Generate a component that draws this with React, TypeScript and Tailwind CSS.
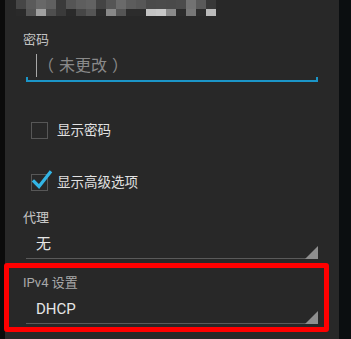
const topRow = [
  '#464646', '#5a5a5a', '#686868', '#606060', '#3a3a3a', '#555555', '#5e5e5e', '#626262', '#444444', '#555555',
  '#6a6a6a', '#5c5c5c', '#575757', '#4a4a4a', '#4b4b4b', '#4a4a4a', '#4c4c4c', '#727272', '#5a5a5a', '#383838',
]
const bottomRow = [
  '#2a2a2a', '#555555', '#a0a0a0', '#4e4e4e', '#3a3a3a', '#2a2a2a', '#464646', '#555555', '#2c2c2c', '#888888',
  '#555555', '#2c2c2c', '#2c2c2c', '#c4c4c4', '#c8c8c8', '#8a8a8a', '#2c2c2c', '#777777', '#2c2c2c', '#bbbbbb',
]

const Mosaic = () => (
  <div className="ml-[11px] flex flex-col">
    <div className="flex">
      {topRow.map((c, i) => (
        <div key={i} className="w-[10px] h-[9px]" style={{ backgroundColor: c }} />
      ))}
    </div>
    <div className="flex">
      {bottomRow.map((c, i) => (
        <div key={i} className="w-[10px] h-[7px]" style={{ backgroundColor: c }} />
      ))}
    </div>
  </div>
)

const Label = ({ text, className }: { text: string; className: string }) => (
  <div className={'ml-[18px] h-[16px] leading-[16px] text-[13px] ' + className}>{text}</div>
)

const Checkbox = ({ checked, label, className }: { checked?: boolean; label: string; className: string }) => (
  <div className={'ml-[26px] flex items-center h-[18px] ' + className}>
    <div className="relative w-[17px] h-[17px] border-[1.5px] border-[#575757]">
      {checked && (
        <svg className="absolute left-[-1.5px] top-[-1.5px] overflow-visible" width="17" height="17" viewBox="0 0 17 17">
          <path d="M3 8.5 L8 13.5 L19 -0.5" fill="none" stroke="#33b5e5" strokeWidth="3.2" strokeLinecap="square" />
        </svg>
      )}
    </div>
    <span className="ml-[9px] text-[13.5px] leading-[18px] text-[#e2e2e2]">{label}</span>
  </div>
)

const Spinner = ({ value }: { value: string }) => (
  <div className="relative ml-[21px] w-[292px] h-[33px] flex flex-col">
    <div className="h-[32px] flex items-end pb-[4px] pl-[10px]">
      <span className="text-[15px] leading-[20px] text-[#e6e6e6]">{value}</span>
    </div>
    <div className="h-[1px] bg-[#5a5a5a]" />
    <svg className="absolute right-0 bottom-0" width="13" height="13" viewBox="0 0 13 13">
      <polygon points="13,0 13,13 0,13" fill="#8e8e8e" />
    </svg>
  </div>
)

export default function App() {
  return (
    <div
      className="relative w-[351px] h-[339px] flex bg-[#0b0e10] overflow-hidden"
      style={{ fontFamily: 'Roboto, "Noto Sans CJK SC", sans-serif' }}
    >
      <div className="w-[5px] bg-[#0b0b0b]" />
      <div className="w-[334px] bg-[#282828] flex flex-col">
        <Mosaic />
        <Label text="密码" className="mt-[16px] text-[#c4c4c4]" />

        {/* password field, focused */}
        <div className="ml-[21px] w-[292px]">
          <div className="h-[29px] pt-[6px] flex items-center pl-[10px]">
            <div className="w-px h-[23px] bg-[#a8a8a8]" />
            <span className="ml-[1px] text-[16px] leading-[23px] text-[#8a8a8a]">
              <span className="mr-[5px]">（</span>未更改<span className="ml-[5px]">）</span>
            </span>
          </div>
          <div className="h-[5px] border-2 border-t-0 border-[#1b95c8]" />
        </div>

        <Checkbox label="显示密码" className="mt-[39px]" />
        <Checkbox checked label="显示高级选项" className="mt-[34px]" />

        <Label text="代理" className="mt-[19px] text-[#c8c8c8]" />
        <Spinner value="无" />

        <Label text="IPv4 设置" className="mt-[16px] text-[#a8a8a8]" />
        <Spinner value="DHCP" />
      </div>
      <div className="flex-1 bg-[#0b0e10]" />

      <div className="absolute left-[4px] top-[263px] w-[325px] h-[69px] border-[5px] border-[#ff0000] rounded-[3px]" />
    </div>
  )
}
